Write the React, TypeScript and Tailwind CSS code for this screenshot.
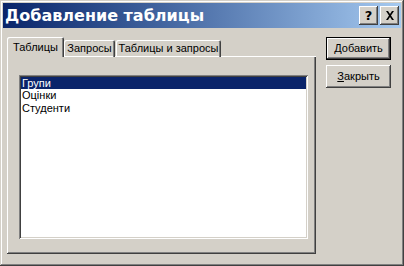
import React from "react";

const raised =
  "shadow-[inset_-1px_-1px_#404040,inset_1px_1px_#ffffff,inset_-2px_-2px_#808080,inset_2px_2px_#d4d0c8]";

function Btn({ children, def }: { children: React.ReactNode; def?: boolean }) {
  return (
    <div
      className={
        "w-[65px] h-[23px] flex items-center justify-center bg-[#d4d0c8] text-black " +
        (def
          ? "border border-black shadow-[inset_-1px_-1px_#404040,inset_1px_1px_#ffffff,inset_-2px_-2px_#808080]"
          : raised)
      }
    >
      {children}
    </div>
  );
}

export default function App() {
  return (
    <div
      className="w-[404px] h-[266px] bg-[#d4d0c8] p-[3px] flex flex-col text-[11px] text-black shadow-[inset_-1px_-1px_#404040,inset_1px_1px_#d4d0c8,inset_-2px_-2px_#808080,inset_2px_2px_#ffffff]"
      style={{ fontFamily: '"Liberation Sans", Arial, sans-serif' }}
    >
      {/* Title bar */}
      <div className="h-[25px] flex items-center justify-between bg-gradient-to-r from-[#0a246a] to-[#a6caf0] pl-[2px] pr-[2px] shrink-0">
        <span
          className="text-white font-bold text-[16px] leading-none"
          style={{ fontFamily: '"DejaVu Sans", Verdana, sans-serif' }}
        >
          Добавление таблицы
        </span>
        <div className="flex items-center gap-[2px]">
          <div className={"w-[19px] h-[19px] bg-[#d4d0c8] flex items-center justify-center " + raised}>
            <span className="font-bold text-[13px] leading-none" style={{ fontFamily: '"DejaVu Sans", sans-serif' }}>
              ?
            </span>
          </div>
          <div className={"w-[19px] h-[19px] bg-[#d4d0c8] flex items-center justify-center " + raised}>
            <svg width="10" height="9" viewBox="0 0 10 9">
              <path d="M1 0h2l2 3 2-3h2L6 4.5 9 9H7L5 6 3 9H1l3-4.5z" fill="#000" />
            </svg>
          </div>
        </div>
      </div>

      {/* Body */}
      <div className="flex flex-1 pt-[9px] pl-[4px] pr-[10px] pb-[9px]">
        {/* Tab control */}
        <div className="w-[309px] flex flex-col">
          <div className="flex items-end h-[20px] relative z-10">
            <div className="h-[20px] w-[57px] bg-[#d4d0c8] flex items-center justify-center shadow-[inset_1px_1px_#ffffff,inset_-1px_0_#404040,inset_-2px_0_#808080] rounded-t-[2px]">
              Таблицы
            </div>
            <div className="h-[17px] w-[51px] flex items-center justify-center shadow-[inset_1px_1px_#ffffff,inset_-1px_0_#404040,inset_-2px_0_#808080] rounded-t-[2px]">
              Запросы
            </div>
            <div className="h-[17px] w-[105px] ml-[1px] flex items-center justify-center shadow-[inset_1px_1px_#ffffff,inset_-1px_0_#404040,inset_-2px_0_#808080] rounded-t-[2px]">
              Таблицы и запросы
            </div>
          </div>
          <div className="flex-1 bg-[#d4d0c8] border-t border-t-white -mt-px flex pt-[18px] pl-[12px] pr-[8px] pb-[15px] shadow-[inset_-1px_-1px_#404040,inset_1px_0_#ffffff,inset_-2px_-2px_#808080]">
            <div className="flex-1 bg-white p-[2px] shadow-[inset_1px_1px_#808080,inset_-1px_-1px_#ffffff,inset_2px_2px_#404040,inset_-2px_-2px_#d4d0c8]">
              <div className="h-[12px] leading-[12px] bg-[#0a246a] text-white pl-[1px]">Групи</div>
              <div className="h-[13px] leading-[13px] pl-[1px]">Оцінки</div>
              <div className="h-[13px] leading-[13px] pl-[1px]">Студенти</div>
            </div>
          </div>
        </div>

        {/* Buttons */}
        <div className="flex flex-col gap-[5px] pl-[10px]">
          <Btn def>
            <span>
              <u>Д</u>обавить
            </span>
          </Btn>
          <Btn>
            <span>
              <u>З</u>акрыть
            </span>
          </Btn>
        </div>
      </div>
    </div>
  );
}
